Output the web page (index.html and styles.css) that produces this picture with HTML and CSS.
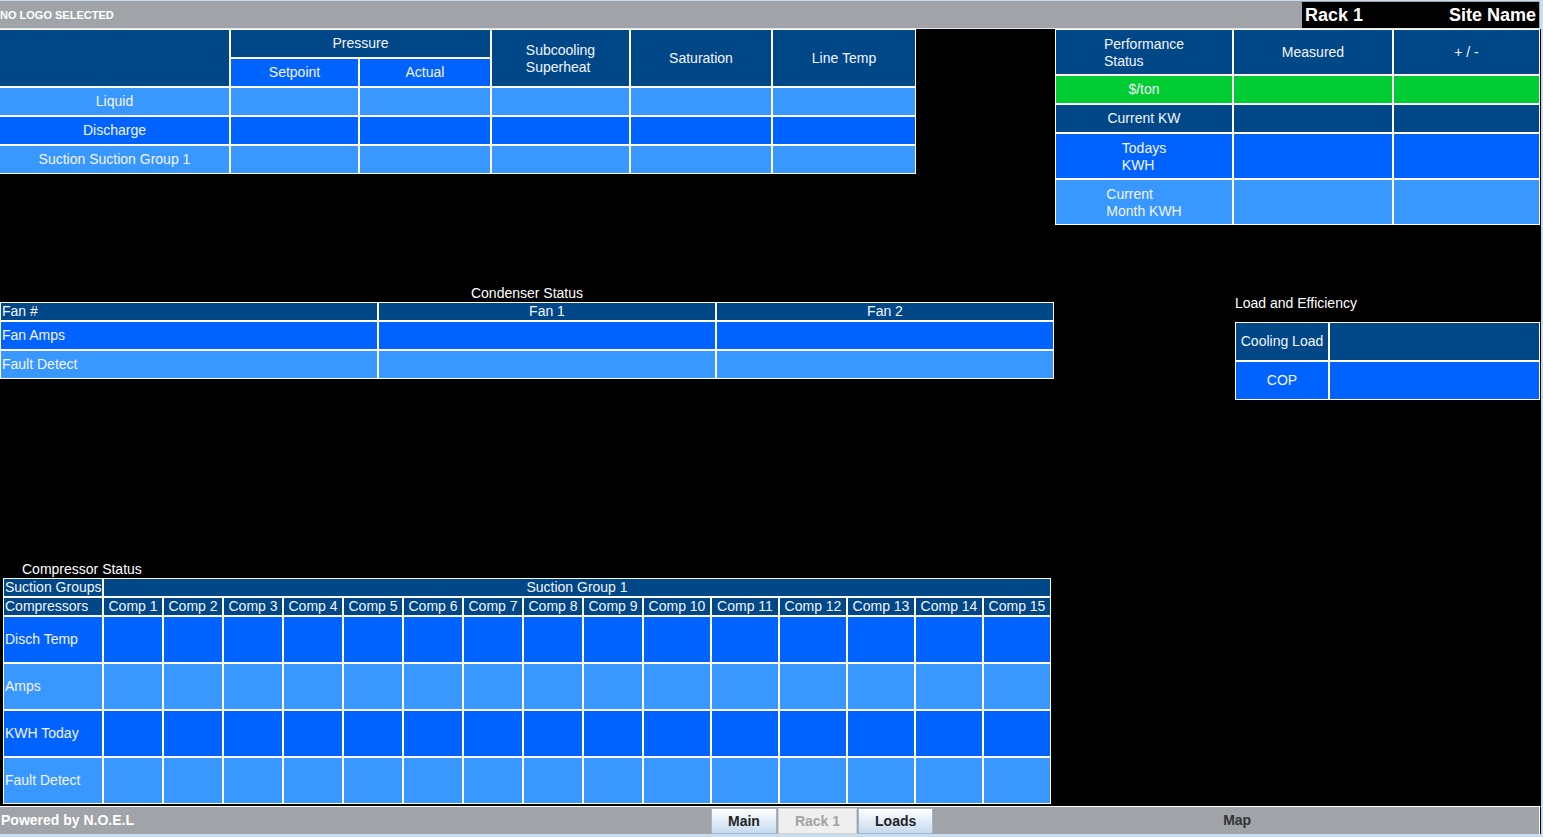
FILE: index.html
```html
<!DOCTYPE html>
<html>
<head>
<meta charset="utf-8">
<title>Rack 1</title>
<link rel="stylesheet" href="styles.css">
</head>
<body>
<div class="app">
  <header class="topbar">
    <div class="logo">NO LOGO SELECTED</div>
    <div class="sitebox"><span>Rack 1</span><span>Site Name</span></div>
  </header>

  <main class="content">
    <section class="row row-top">
      <div class="grid pressure">
        <div class="c dark r2"></div>
        <div class="c dark c2">Pressure</div>
        <div class="c dark r2"><span class="ml">Subcooling<br>Superheat</span></div>
        <div class="c dark r2 nb">Saturation</div>
        <div class="c dark r2 nb">Line Temp</div>
        <div class="c mid">Setpoint</div>
        <div class="c mid">Actual</div>

        <div class="c light">Liquid</div>
        <div class="c light"></div><div class="c light"></div><div class="c light"></div><div class="c light"></div><div class="c light"></div>

        <div class="c mid">Discharge</div>
        <div class="c mid"></div><div class="c mid"></div><div class="c mid"></div><div class="c mid"></div><div class="c mid"></div>

        <div class="c light">Suction Suction Group 1</div>
        <div class="c light"></div><div class="c light"></div><div class="c light"></div><div class="c light"></div><div class="c light"></div>
      </div>

      <div class="grid perf">
        <div class="c dark"><span class="ml">Performance<br>Status</span></div>
        <div class="c dark nb">Measured</div>
        <div class="c dark nb">+ / -</div>

        <div class="c green">$/ton</div>
        <div class="c green"></div>
        <div class="c green"></div>

        <div class="c dark">Current KW</div>
        <div class="c dark"></div>
        <div class="c dark"></div>

        <div class="c mid"><span class="ml">Todays<br>KWH</span></div>
        <div class="c mid"></div>
        <div class="c mid"></div>

        <div class="c light"><span class="ml">Current<br>Month KWH</span></div>
        <div class="c light"></div>
        <div class="c light"></div>
      </div>
    </section>

    <section class="row row-mid">
      <div class="cond-block">
        <div class="title cond-title">Condenser Status</div>
        <div class="grid cond">
          <div class="c dark left">Fan #</div>
          <div class="c dark">Fan 1</div>
          <div class="c dark">Fan 2</div>
          <div class="c mid left">Fan Amps</div>
          <div class="c mid"></div>
          <div class="c mid"></div>
          <div class="c light left">Fault Detect</div>
          <div class="c light"></div>
          <div class="c light"></div>
        </div>
      </div>

      <div class="load-block">
        <div class="title load-title">Load and Efficiency</div>
        <div class="grid load">
          <div class="c dark">Cooling Load</div>
          <div class="c dark"></div>
          <div class="c mid">COP</div>
          <div class="c mid"></div>
        </div>
      </div>
    </section>

    <section class="row-bottom">
      <div class="title comp-title">Compressor Status</div>
      <div class="grid comp">
        <div class="c dark left">Suction Groups</div>
        <div class="c dark span-all">Suction Group 1</div>

        <div class="c dark left">Compressors</div>
        <div class="c dark">Comp 1</div>
        <div class="c dark">Comp 2</div>
        <div class="c dark">Comp 3</div>
        <div class="c dark">Comp 4</div>
        <div class="c dark">Comp 5</div>
        <div class="c dark">Comp 6</div>
        <div class="c dark">Comp 7</div>
        <div class="c dark">Comp 8</div>
        <div class="c dark">Comp 9</div>
        <div class="c dark">Comp 10</div>
        <div class="c dark">Comp 11</div>
        <div class="c dark">Comp 12</div>
        <div class="c dark">Comp 13</div>
        <div class="c dark">Comp 14</div>
        <div class="c dark">Comp 15</div>

        <div class="c mid left">Disch Temp</div>
        <div class="c mid"></div><div class="c mid"></div><div class="c mid"></div><div class="c mid"></div><div class="c mid"></div>
        <div class="c mid"></div><div class="c mid"></div><div class="c mid"></div><div class="c mid"></div><div class="c mid"></div>
        <div class="c mid"></div><div class="c mid"></div><div class="c mid"></div><div class="c mid"></div><div class="c mid"></div>

        <div class="c light left">Amps</div>
        <div class="c light"></div><div class="c light"></div><div class="c light"></div><div class="c light"></div><div class="c light"></div>
        <div class="c light"></div><div class="c light"></div><div class="c light"></div><div class="c light"></div><div class="c light"></div>
        <div class="c light"></div><div class="c light"></div><div class="c light"></div><div class="c light"></div><div class="c light"></div>

        <div class="c mid left">KWH Today</div>
        <div class="c mid"></div><div class="c mid"></div><div class="c mid"></div><div class="c mid"></div><div class="c mid"></div>
        <div class="c mid"></div><div class="c mid"></div><div class="c mid"></div><div class="c mid"></div><div class="c mid"></div>
        <div class="c mid"></div><div class="c mid"></div><div class="c mid"></div><div class="c mid"></div><div class="c mid"></div>

        <div class="c light left">Fault Detect</div>
        <div class="c light"></div><div class="c light"></div><div class="c light"></div><div class="c light"></div><div class="c light"></div>
        <div class="c light"></div><div class="c light"></div><div class="c light"></div><div class="c light"></div><div class="c light"></div>
        <div class="c light"></div><div class="c light"></div><div class="c light"></div><div class="c light"></div><div class="c light"></div>
      </div>
    </section>
  </main>

  <footer class="footer">
    <div class="powered">Powered by N.O.E.L</div>
    <nav class="tabs">
      <span class="btn">Main</span>
      <span class="btn disabled">Rack 1</span>
      <span class="btn">Loads</span>
    </nav>
    <div class="map">Map</div>
  </footer>
</div>
</body>
</html>
```

FILE: styles.css
```css
* { box-sizing: border-box; }

html, body {
  margin: 0;
  padding: 0;
}

body {
  background: #c9ddf1;
  font-family: "Liberation Sans", Arial, Helvetica, sans-serif;
  width: 1543px;
  height: 837px;
  overflow: hidden;
}

.app {
  width: 1541px;
  margin-top: 1px;
}

/* ---------- top bar ---------- */
.topbar {
  width: 1540px;
  height: 28px;
  background: #a0a3a7;
  border-bottom: 1px solid #e2e6ea;
  display: flex;
  justify-content: space-between;
  align-items: flex-start;
}

.logo {
  color: #fff;
  font-weight: bold;
  font-size: 11px;
  line-height: 27px;
  padding-top: 1px;
  height: 27px;
}

.sitebox {
  width: 237px;
  height: 26px;
  margin-top: 1px;
  margin-right: 1px;
  background: #000;
  color: #fff;
  font-weight: bold;
  font-size: 18px;
  display: flex;
  justify-content: space-between;
  align-items: center;
  padding: 0 3px;
}

/* ---------- content ---------- */
.content {
  width: 1541px;
  height: 777px;
  background: #000;
  padding-right: 1px;
}

.row {
  display: flex;
  justify-content: space-between;
  align-items: flex-start;
}

.row-mid {
  margin-top: 60px;
}

.row-bottom {
  margin-top: 161px;
}

.title {
  color: #fff;
  font-size: 14px;
  line-height: 17px;
  height: 17px;
  white-space: nowrap;
}

/* generic grid table */
.grid {
  display: grid;
  background: #fff;
  gap: 2px;
  padding: 1px;
  width: max-content;
}

.c {
  display: flex;
  align-items: center;
  justify-content: center;
  text-align: center;
  color: #f4f4ff;
  font-size: 14px;
  line-height: 16px;
  padding-bottom: 2px;
  white-space: nowrap;
  overflow: hidden;
}

.c.nb {
  padding-bottom: 0;
}

.c.left {
  justify-content: flex-start;
  padding-left: 1px;
}

.ml {
  display: inline-block;
  text-align: left;
  line-height: 17px;
  padding-top: 4px;
}

.dark  { background: #004787; }
.mid   { background: #0063ff; }
.light { background: #3898ff; }
.green { background: #00cc33; }

.r2 { grid-row: span 2; }
.c2 { grid-column: span 2; }

/* pressure table */
.pressure {
  grid-template-columns: 229px 127px 130px 137px 140px 142px;
  grid-template-rows: repeat(5, 27px);
  padding-left: 0;
}

/* performance table */
.perf {
  grid-template-columns: 176px 158px 145px;
  grid-template-rows: 44px 27px 27px 44px 44px;
}

/* condenser */
.cond-block {
  width: 1054px;
}

.cond-title {
  text-align: center;
}

.cond {
  grid-template-columns: 376px 336px 336px;
  grid-template-rows: 17px 27px 27px;
}

/* load & efficiency */
.load-block {
  width: 305px;
  margin-top: 10px;
}

.load-title {
  margin-bottom: 10px;
}

.load {
  grid-template-columns: 92px 209px;
  grid-template-rows: 37px 37px;
}

/* compressor */
.comp-title {
  margin-left: 22px;
}

.comp {
  margin-left: 3px;
  grid-template-columns: 98px repeat(9, 58px) repeat(6, 66px);
  grid-template-rows: 17px 17px 45px 45px 45px 45px;
}

.span-all {
  grid-column: span 15;
}

/* ---------- footer ---------- */
.footer {
  width: 1541px;
  height: 28px;
  border-top: 1px solid #fff;
  border-right: 1px solid #000;
  box-shadow: inset -1px 0 0 #fff;
  background: #a0a3a7;
  display: flex;
  align-items: flex-start;
}

.powered {
  width: 711px;
  padding-left: 1px;
  color: #fff;
  font-weight: bold;
  font-size: 14px;
  line-height: 27px;
  white-space: nowrap;
}

.tabs {
  display: flex;
  margin-top: 1px;
}

.btn {
  display: block;
  height: 26px;
  padding: 0 16px;
  margin-right: 1px;
  border: 1px solid #9fb3c9;
  background: linear-gradient(#ffffff, #c6daef);
  color: #222;
  font-weight: bold;
  font-size: 14px;
  line-height: 24px;
  white-space: nowrap;
}

.btn.disabled {
  background: #efefef;
  border-color: #d2d2d2;
  color: #a2a2a2;
}

.map {
  flex: 1;
  text-align: center;
  color: #333;
  font-weight: bold;
  font-size: 14px;
  line-height: 27px;
}
```
